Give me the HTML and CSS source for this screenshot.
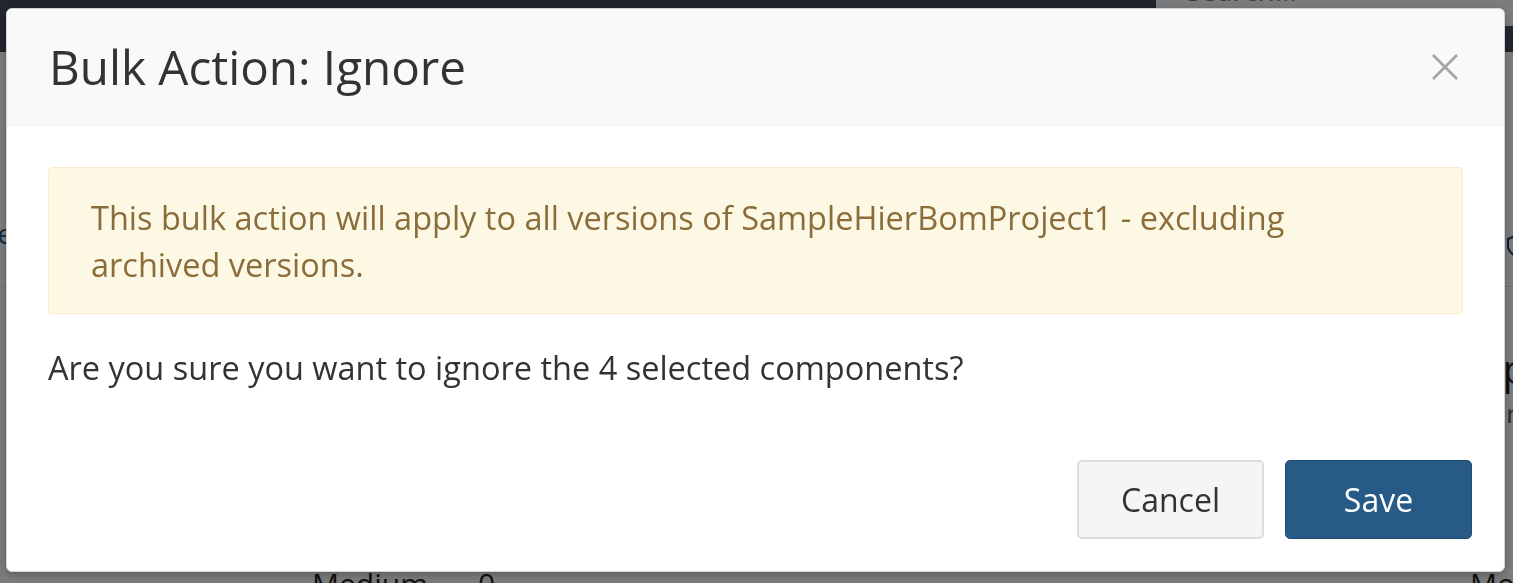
FILE: index.html
```html
<!DOCTYPE html>
<html lang="en">
<head>
<meta charset="utf-8">
<title>Bulk Action: Ignore</title>
<link rel="stylesheet" href="styles.css">
</head>
<body>
<div class="page">
  <header class="topbar">
    <div class="topbar-fill"></div>
    <div class="search"><span class="search-text">Search...</span></div>
  </header>
  <main class="content">
    <div class="row row-first">
      <span class="edge-link">Figure</span>
      <span class="edge-icon">
        <svg width="16" height="22" viewBox="0 0 16 22"><path d="M8 1 L15 4 V11 C15 16 11 19 8 21 C5 19 1 16 1 11 V4 Z" fill="none" stroke="#1d3a5c" stroke-width="2"/><path d="M8 3 L13 5.5 V11" fill="none" stroke="#c79a3c" stroke-width="1.5"/></svg>
      </span>
    </div>
    <div class="row row-second">
      <span class="edge-big">p</span>
      <span class="edge-small">r</span>
    </div>
    <div class="row row-last">
      <span class="cell-medium">Medium</span>
      <span class="cell-zero">0</span>
      <span class="cell-mo">Mo</span>
    </div>
  </main>
</div>

<div class="backdrop">
  <div class="modal" role="dialog" aria-labelledby="modal-title">
    <div class="modal-header">
      <h4 class="modal-title" id="modal-title">Bulk Action: Ignore</h4>
      <button class="close" type="button" aria-label="Close">
        <svg width="28" height="28" viewBox="0 0 28 28"><path d="M2 2 L26 26 M26 2 L2 26" stroke="#a3a3a3" stroke-width="2.6" stroke-linecap="butt"/></svg>
      </button>
    </div>
    <div class="modal-body">
      <div class="alert">This bulk action will apply to all versions of SampleHierBomProject1 - excluding archived versions.</div>
      <p class="question">Are you sure you want to ignore the 4 selected components?</p>
    </div>
    <div class="modal-footer">
      <button class="btn btn-default" type="button">Cancel</button>
      <button class="btn btn-primary" type="button">Save</button>
    </div>
  </div>
</div>
</body>
</html>
```

FILE: styles.css
```css
html, body {
  margin: 0;
  padding: 0;
  height: 100%;
  overflow: hidden;
}

body {
  background: #f5f8fc;
  font-family: "Open Sans", "Noto Sans", "Liberation Sans", sans-serif;
  color: #333;
}

/* ---------- background page ---------- */
.page {
  height: 583px;
  display: flex;
  flex-direction: column;
}

.topbar {
  height: 52px;
  background: #434d5b;
  display: flex;
  align-items: flex-start;
  flex-shrink: 0;
}

.topbar-fill {
  width: 1156px;
}

.search {
  flex: 1;
  height: 26px;
  background: #f5f8fc;
  overflow: hidden;
  padding-left: 30px;
}

.search-text {
  display: block;
  margin-top: -29px;
  font-size: 28px;
  line-height: 38px;
  color: #777;
}

.content {
  flex: 1;
  display: flex;
  flex-direction: column;
}

.row {
  display: flex;
  align-items: flex-end;
  border-bottom: 1px solid #d9dde2;
}

.row-first {
  height: 234px;
  flex-shrink: 0;
  justify-content: space-between;
}

.edge-link {
  margin-left: -68px;
  margin-bottom: 34px;
  font-size: 28px;
  color: #23527c;
}

.edge-icon {
  margin-right: -10px;
  margin-bottom: 24px;
}

.row-second {
  height: 272px;
  flex-shrink: 0;
  flex-direction: column;
  align-items: flex-end;
  justify-content: flex-start;
  border-bottom: none;
}

.edge-big {
  margin-top: 60px;
  margin-right: -14px;
  font-size: 40px;
  color: #222;
  line-height: 44px;
}

.edge-small {
  margin-top: 4px;
  margin-right: -4px;
  font-size: 26px;
  color: #555;
}

.row-last {
  border-bottom: none;
  align-items: flex-start;
  height: 40px;
  flex-shrink: 0;
  padding-top: 4px;
  font-size: 30px;
  color: #222;
}

.cell-medium {
  margin-left: 312px;
  width: 166px;
}

.cell-zero {
  flex: 1;
}

.cell-mo {
  width: 43px;
  overflow: hidden;
  white-space: nowrap;
}

/* ---------- modal ---------- */
.backdrop {
  position: fixed;
  inset: 0;
  background: rgba(0, 0, 0, 0.5);
  padding: 8px 8px 0 6px;
}

.modal {
  width: 1499px;
  box-sizing: border-box;
  background: #fff;
  border: 1px solid #d4d4d4;
  border-radius: 6px;
  overflow: hidden;
  box-shadow: 0 3px 9px rgba(0, 0, 0, 0.25);
}

.modal-header {
  height: 117px;
  box-sizing: border-box;
  background: #f9f9f9;
  border-bottom: 1px solid #efefef;
  display: flex;
  align-items: center;
  justify-content: space-between;
  padding: 0 45px 0 42px;
}

.modal-title {
  margin: 0;
  font-size: 47.6px;
  font-weight: 400;
  color: #333;
  line-height: 62px;
}

.close {
  border: none;
  background: none;
  padding: 0;
  margin: 0;
  width: 28px;
  height: 28px;
  display: flex;
  cursor: pointer;
}

.modal-body {
  padding: 41px 41px 41px 41px;
}

.alert {
  background: #fcf8e3;
  border: 1px solid #faebcc;
  border-radius: 4px;
  color: #8a6d3b;
  font-size: 32.5px;
  line-height: 47px;
  padding: 26px 100px 25px 42px;
}

.question {
  margin: 34px 0 0;
  font-size: 32.5px;
  line-height: 40px;
  color: #333;
}

.modal-footer {
  display: flex;
  justify-content: flex-end;
  gap: 21px;
  padding: 31px 32px 32px;
}

.btn {
  width: 187px;
  height: 79px;
  box-sizing: border-box;
  border-radius: 5px;
  font-family: "Open Sans", "Noto Sans", "Liberation Sans", sans-serif;
  font-size: 32px;
  cursor: pointer;
  padding: 0;
}

.btn-default {
  background: #f5f5f5;
  border: 2px solid #dddddd;
  color: #333;
}

.btn-primary {
  background: #285a88;
  border: 1px solid #214c74;
  color: #fff;
}
```
